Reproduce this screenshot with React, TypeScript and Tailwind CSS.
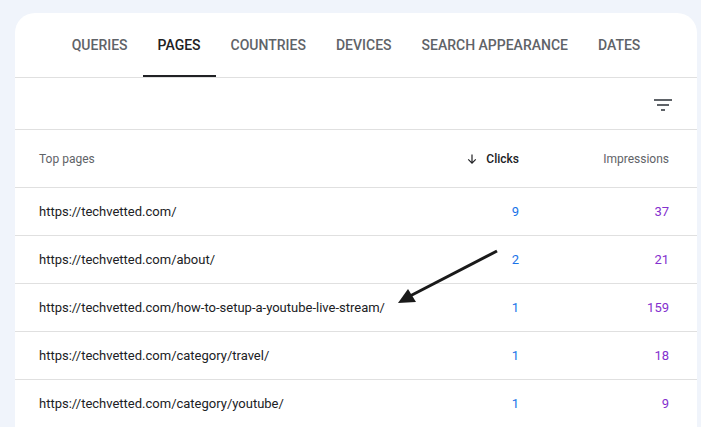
const tabs = ['Queries', 'Pages', 'Countries', 'Devices', 'Search appearance', 'Dates'];

const rows = [
  { page: 'https://techvetted.com/', clicks: 9, impressions: 37 },
  { page: 'https://techvetted.com/about/', clicks: 2, impressions: 21 },
  { page: 'https://techvetted.com/how-to-setup-a-youtube-live-stream/', clicks: 1, impressions: 159 },
  { page: 'https://techvetted.com/category/travel/', clicks: 1, impressions: 18 },
  { page: 'https://techvetted.com/category/youtube/', clicks: 1, impressions: 9 },
];

function App() {
  return (
    <div className="relative h-[427px] overflow-hidden bg-[#f0f4fb] pt-[13px] pl-[15px] font-['Roboto',sans-serif]">
      <div className="w-[682px] h-[430px] rounded-t-[20px] bg-white">
        {/* Tabs */}
        <div className="flex justify-center h-[65px] border-b border-[#e0e0e0]">
          {tabs.map((tab) => (
            <div
              key={tab}
              className={`relative flex items-center px-[15px] text-[14px] font-medium uppercase ${
                tab === 'Pages' ? 'text-[#202124]' : 'text-[#5f6368]'
              }`}
            >
              {tab}
              {tab === 'Pages' && <span className="absolute left-0 right-0 bottom-0 h-[2px] bg-[#202124]" />}
            </div>
          ))}
        </div>

        {/* Toolbar */}
        <div className="flex items-center justify-end h-[52px] border-b border-[#e0e0e0] pr-[25px]">
          <svg width="18" height="12" viewBox="0 0 18 12" className="mt-[2px]">
            <rect x="0" y="0" width="18" height="2" fill="#5f6368" />
            <rect x="3" y="5" width="12" height="2" fill="#5f6368" />
            <rect x="7" y="10" width="4" height="2" fill="#5f6368" />
          </svg>
        </div>

        {/* Header */}
        <div className="flex items-center h-[58px] border-b border-[#e0e0e0] pl-[24px] pr-[28px] text-[12px]">
          <div className="flex-1 text-[#5f6368]">Top pages</div>
          <div className="flex items-center justify-end gap-[8px] w-[150px] text-[#202124] font-medium">
            <svg width="12" height="12" viewBox="0 0 16 16">
              <path d="M8 2v11M3 8.5l5 5 5-5" fill="none" stroke="#202124" strokeWidth="1.6" />
            </svg>
            Clicks
          </div>
          <div className="w-[150px] text-right text-[#5f6368]">Impressions</div>
        </div>

        {/* Rows */}
        {rows.map((r) => (
          <div key={r.page} className="flex items-center h-[48px] border-b border-[#e0e0e0] pl-[24px] pr-[28px]">
            <div className="flex-1 min-w-0 whitespace-nowrap text-[13px] text-[#202124]">{r.page}</div>
            <div className="w-[150px] shrink-0 text-right text-[13px] text-[#1a73e8]">{r.clicks}</div>
            <div className="w-[150px] shrink-0 text-right text-[13px] text-[#8430ce]">{r.impressions}</div>
          </div>
        ))}
      </div>

      {/* Annotation arrow */}
      <svg className="absolute left-0 top-0" width="701" height="427" viewBox="0 0 701 427">
        <line x1="497" y1="251" x2="410" y2="296" stroke="#1a1a1a" strokeWidth="3" />
        <polygon points="398,303 408,289 416,302" fill="#1a1a1a" />
      </svg>
    </div>
  );
}

export default App;
